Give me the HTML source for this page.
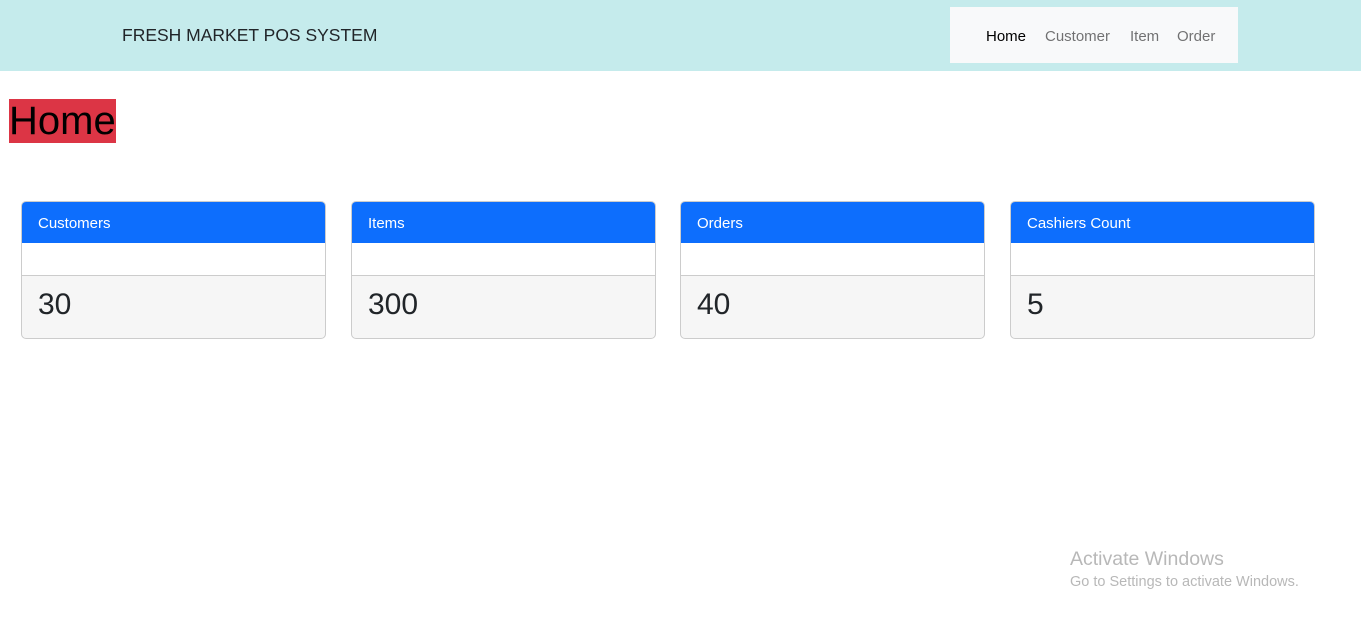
<!DOCTYPE html>
<html><head><style>
body{margin:0;width:1361px;height:623px;background:#fff;font-family:"Liberation Sans",sans-serif;position:relative;overflow:hidden}
.nav{position:absolute;left:0;top:0;width:1361px;height:71px;background:#c5ebec}
.brand{position:absolute;left:122px;top:25px;font-size:17.5px;color:#212529}
.links{position:absolute;left:950px;top:7px;width:288px;height:56px;background:#f8f9fa}
.links span{position:absolute;top:21px;font-size:15px;color:rgba(0,0,0,.55)}
.home{position:absolute;left:9px;top:99px;width:107px;height:44px;background:#dc3545;font-size:40px;line-height:44px;color:#000}
.card{position:absolute;top:201px;width:303px;height:136px;border:1px solid #ccc;border-radius:5px;overflow:hidden;background:#f6f6f6}
.card .h{height:41px;background:#0d6efd;color:#fff;font-size:15px;line-height:43px;padding-left:16px}
.card .m{height:32px;background:#fff;border-bottom:1px solid #ccc}
.card .n{font-size:30px;color:#212529;padding-left:16px;line-height:58px}
.wm{position:absolute;left:1070px;top:548px;color:#b8b8b8}
</style></head><body>
<div class="nav"><div class="brand">FRESH MARKET POS SYSTEM</div>
<div class="links"><span style="left:36px;color:#000">Home</span><span style="left:95px">Customer</span><span style="left:180px">Item</span><span style="left:227px">Order</span></div></div>
<div class="home">Home</div>
<div class="card" style="left:21px"><div class="h">Customers</div><div class="m"></div><div class="n">30</div></div>
<div class="card" style="left:351px"><div class="h">Items</div><div class="m"></div><div class="n">300</div></div>
<div class="card" style="left:680px"><div class="h">Orders</div><div class="m"></div><div class="n">40</div></div>
<div class="card" style="left:1010px"><div class="h">Cashiers Count</div><div class="m"></div><div class="n">5</div></div>
<div class="wm"><div style="font-size:19.5px">Activate Windows</div><div style="font-size:14.5px;margin-top:3px">Go to Settings to activate Windows.</div></div>
</body></html>
